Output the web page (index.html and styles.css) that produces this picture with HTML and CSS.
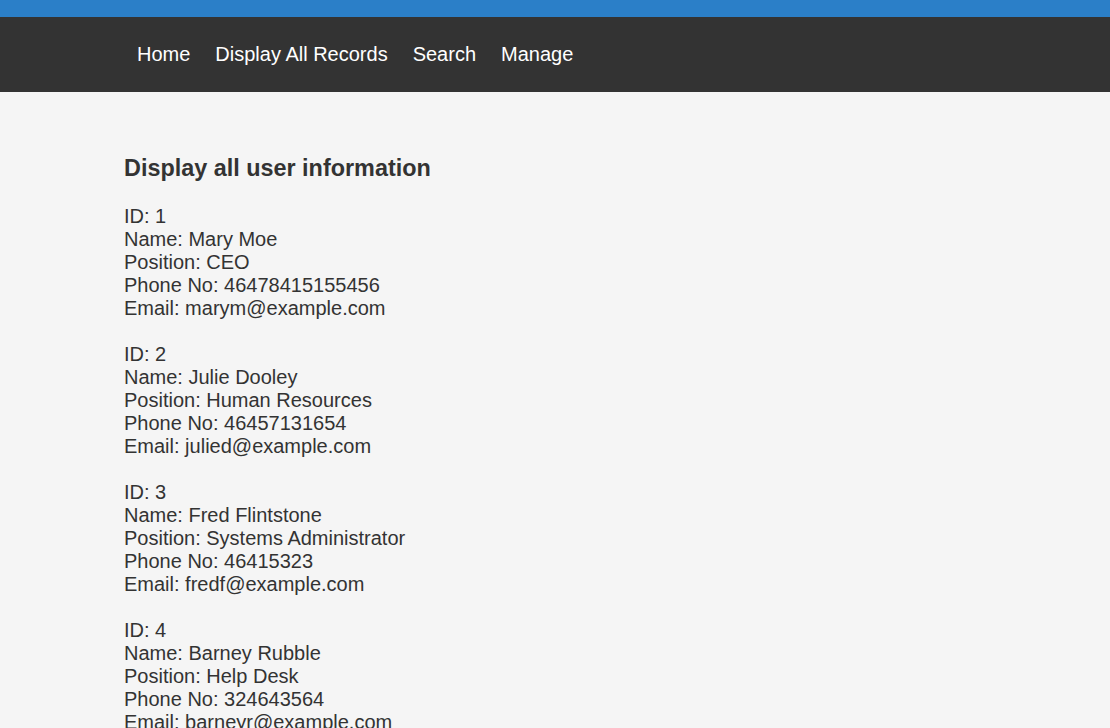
FILE: index.html
```html
<!DOCTYPE html>
<html>
<head>
<meta charset="utf-8">
<link rel="stylesheet" href="styles.css">
</head>
<body>
<header class="topbar"></header>
<nav class="nav">
  <a href="#">Home</a>
  <a href="#">Display All Records</a>
  <a href="#">Search</a>
  <a href="#">Manage</a>
</nav>
<main class="content">
  <h2 class="title">Display all user information</h2>
  <div class="record">ID: 1<br>Name: Mary Moe<br>Position: CEO<br>Phone No: 46478415155456<br>Email: marym@example.com</div>
  <div class="record">ID: 2<br>Name: Julie Dooley<br>Position: Human Resources<br>Phone No: 46457131654<br>Email: julied@example.com</div>
  <div class="record">ID: 3<br>Name: Fred Flintstone<br>Position: Systems Administrator<br>Phone No: 46415323<br>Email: fredf@example.com</div>
  <div class="record">ID: 4<br>Name: Barney Rubble<br>Position: Help Desk<br>Phone No: 324643564<br>Email: barneyr@example.com</div>
</main>
</body>
</html>
```
FILE: styles.css
```css
html, body {
  margin: 0;
  padding: 0;
  background: #f5f5f5;
  font-family: "Liberation Sans", Arial, sans-serif;
  color: #333;
}
.topbar {
  height: 17px;
  background: #2b7fc8;
}
.nav {
  height: 75px;
  background: #333;
  display: flex;
  align-items: center;
  padding-left: 137px;
  gap: 25px;
}
.nav a {
  color: #fff;
  text-decoration: none;
  font-size: 20px;
}
.content {
  padding: 63px 124px 0;
  font-size: 20px;
  line-height: 23px;
}
.title {
  font-size: 23.4px;
  font-weight: bold;
  margin: 0 0 23px;
  line-height: 27px;
}
.record {
  margin-bottom: 23px;
}
```
